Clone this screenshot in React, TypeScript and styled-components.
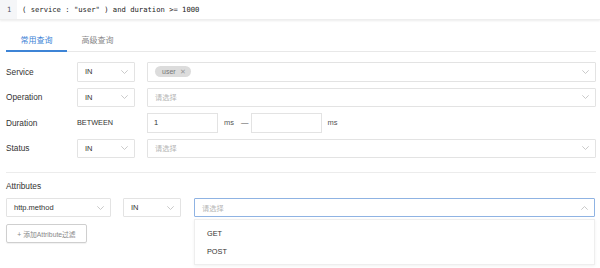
import React from 'react';
import styled, { createGlobalStyle } from 'styled-components';

const GlobalStyle = createGlobalStyle`
  html, body {
    margin: 0;
    padding: 0;
    background: #fff;
    font-family: "Liberation Sans", "Noto Sans CJK SC", Arial, sans-serif;
    color: #333;
    overflow: hidden;
  }
`;

const Page = styled.div`
  width: 600px;
  height: 268px;
  position: relative;
`;

const Editor = styled.div`
  display: flex;
  height: 19px;
  align-items: stretch;
  box-shadow: 0 1px 2px rgba(0, 0, 0, 0.08);
  border-bottom: 1px solid #eee;
`;

const Gutter = styled.div`
  width: 17px;
  background: #f5f6f8;
  font-family: "DejaVu Sans Mono", "Liberation Mono", monospace;
  font-size: 7.2px;
  color: #556;
  display: flex;
  align-items: center;
  padding-left: 7px;
  box-sizing: border-box;
`;

const Code = styled.div`
  font-family: "DejaVu Sans Mono", "Liberation Mono", monospace;
  font-size: 7.2px;
  color: #222;
  display: flex;
  align-items: center;
  padding-left: 5px;
  white-space: pre;
`;

const Body = styled.div`
  padding: 9px 4px 0 6px;
`;

const Tabs = styled.div`
  display: flex;
  border-bottom: 1px solid #e8e8e8;
  height: 22px;
`;

const Tab = styled.div<{ $active?: boolean }>`
  width: 61px;
  display: flex;
  align-items: center;
  justify-content: center;
  font-family: "Noto Sans CJK SC", sans-serif;
  font-size: 8px;
  color: ${(p) => (p.$active ? '#3d84d6' : '#888')};
  border-bottom: 2px solid ${(p) => (p.$active ? '#3d84d6' : 'transparent')};
  margin-bottom: -1px;
`;

const Form = styled.div`
  display: grid;
  grid-template-columns: 59px 58px 449px;
  column-gap: 12px;
  row-gap: 6px;
  grid-auto-rows: 19.5px;
  margin-top: 10px;
`;

const Label = styled.div`
  font-size: 8.3px;
  color: #333;
  display: flex;
  align-items: center;
`;

const Select = styled.div<{ $focused?: boolean }>`
  box-sizing: border-box;
  height: 100%;
  border: 1px solid ${(p) => (p.$focused ? '#8fb3e3' : '#e3e3e3')};
  border-radius: 1px;
  display: flex;
  align-items: center;
  padding: 0 6px 0 7px;
  font-size: 7.5px;
  color: #333;
  background: #fff;
  position: relative;
`;

const SelectValue = styled.div`
  flex: 1;
  display: flex;
  align-items: center;
`;

const Placeholder = styled.span`
  font-family: "Noto Sans CJK SC", sans-serif;
  font-size: 7.2px;
  color: #b5b5b5;
`;

const Tag = styled.span`
  background: #dcdcdc;
  color: #777;
  border-radius: 6px;
  height: 11px;
  padding: 0 5px 0 7px;
  display: inline-flex;
  align-items: center;
  gap: 4px;
  font-size: 7px;
`;

const TagClose = styled.span`
  font-size: 6.5px;
  color: #999;
`;

const StaticText = styled.div`
  font-size: 7.3px;
  color: #333;
  display: flex;
  align-items: center;
`;

const RangeRow = styled.div`
  display: flex;
  align-items: center;
  height: 100%;
`;

const NumInput = styled.div`
  box-sizing: border-box;
  width: 71px;
  height: 100%;
  border: 1px solid #e3e3e3;
  display: flex;
  align-items: center;
  padding-left: 6px;
  font-size: 7.5px;
`;

const Unit = styled.span<{ $gap: number }>`
  font-size: 7.5px;
  color: #555;
  margin-left: 6px;
  margin-right: ${(p) => p.$gap}px;
`;

const Dash = styled.span`
  font-size: 7.5px;
  color: #555;
  margin-right: 2px;
`;

const Divider = styled.div`
  height: 1px;
  background: #ececec;
  margin-top: 14px;
`;

const SectionTitle = styled.div`
  font-size: 8.3px;
  color: #333;
  margin-top: 8px;
  height: 10px;
  line-height: 10px;
`;

const AttrRow = styled.div`
  display: grid;
  grid-template-columns: 105px 58px 402px;
  column-gap: 12px;
  height: 19px;
  margin-top: 7px;
  & > :nth-child(3) {
    margin-left: 1px;
  }
`;

const AttrSlot = styled.div`
  position: relative;
  height: 100%;
`;

const Dropdown = styled.div`
  position: absolute;
  top: 21px;
  left: 0;
  right: 0;
  height: 46px;
  background: #fff;
  border: 1px solid #eee;
  box-shadow: 0 1px 3px rgba(0, 0, 0, 0.06);
  display: flex;
  flex-direction: column;
  justify-content: center;
  gap: 9px;
  padding-left: 12px;
  box-sizing: border-box;
  z-index: 2;
`;

const Option = styled.div`
  font-size: 7.3px;
  color: #333;
`;

const AddButton = styled.div`
  margin-top: 7px;
  width: 81px;
  height: 19px;
  box-sizing: border-box;
  border: 1px solid #cfcfcf;
  border-radius: 2px;
  box-shadow: 0 1px 1px rgba(0, 0, 0, 0.06);
  display: flex;
  align-items: center;
  justify-content: center;
  font-family: "Liberation Sans", "Noto Sans CJK SC", sans-serif;
  font-size: 6.8px;
  color: #888;
  white-space: nowrap;
`;

const Chevron: React.FC<{ up?: boolean }> = ({ up }) => (
  <svg width="7" height="4" viewBox="0 0 7 4" style={{ flex: 'none' }}>
    <polyline
      points={up ? '0.3,3.7 3.5,0.5 6.7,3.7' : '0.3,0.3 3.5,3.5 6.7,0.3'}
      fill="none"
      stroke="#bdbdbd"
      strokeWidth="0.8"
    />
  </svg>
);

const App: React.FC = () => {
  return (
    <Page>
      <GlobalStyle />
      <Editor>
        <Gutter>1</Gutter>
        <Code>( service : "user" ) and duration &gt;= 1000</Code>
      </Editor>
      <Body>
        <Tabs>
          <Tab $active>常用查询</Tab>
          <Tab>高级查询</Tab>
        </Tabs>

        <Form>
          <Label>Service</Label>
          <Select>
            <SelectValue>IN</SelectValue>
            <Chevron />
          </Select>
          <Select>
            <SelectValue>
              <Tag>
                user <TagClose>✕</TagClose>
              </Tag>
            </SelectValue>
            <Chevron />
          </Select>

          <Label>Operation</Label>
          <Select>
            <SelectValue>IN</SelectValue>
            <Chevron />
          </Select>
          <Select>
            <SelectValue>
              <Placeholder>请选择</Placeholder>
            </SelectValue>
            <Chevron />
          </Select>

          <Label>Duration</Label>
          <StaticText>BETWEEN</StaticText>
          <RangeRow>
            <NumInput>1</NumInput>
            <Unit $gap={7}>ms</Unit>
            <Dash>—</Dash>
            <NumInput />
            <Unit $gap={0}>ms</Unit>
          </RangeRow>

          <Label>Status</Label>
          <Select>
            <SelectValue>IN</SelectValue>
            <Chevron />
          </Select>
          <Select>
            <SelectValue>
              <Placeholder>请选择</Placeholder>
            </SelectValue>
            <Chevron />
          </Select>
        </Form>

        <Divider />
        <SectionTitle>Attributes</SectionTitle>

        <AttrRow>
          <Select>
            <SelectValue>http.method</SelectValue>
            <Chevron />
          </Select>
          <Select>
            <SelectValue>IN</SelectValue>
            <Chevron />
          </Select>
          <AttrSlot>
            <Select $focused>
              <SelectValue>
                <Placeholder>请选择</Placeholder>
              </SelectValue>
              <Chevron up />
            </Select>
            <Dropdown>
              <Option>GET</Option>
              <Option>POST</Option>
            </Dropdown>
          </AttrSlot>
        </AttrRow>

        <AddButton>+ 添加Attribute过滤</AddButton>
      </Body>
    </Page>
  );
};

export default App;
